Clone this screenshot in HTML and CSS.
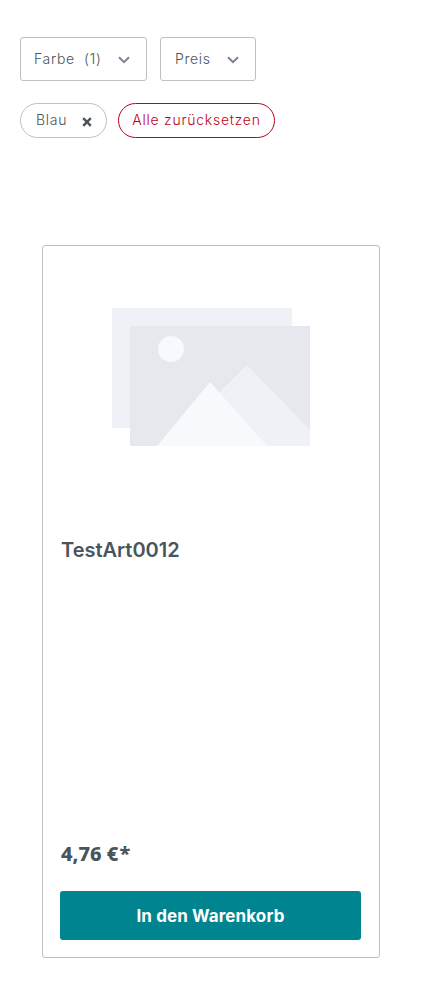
FILE: index.html
```html
<!DOCTYPE html>
<html lang="de">
<head>
    <meta charset="UTF-8">
    <meta name="viewport" content="width=device-width, initial-scale=1.0">
    <title>TestArt0012</title>
    <link rel="stylesheet" href="styles.css">
</head>
<body>
    <div class="filter-row">
        <button class="filter-btn filter-color">
            <span>Farbe&nbsp; (1)</span>
            <svg class="chevron" width="12" height="8" viewBox="0 0 12 8"><path d="M1 1.2l5 5 5-5" fill="none" stroke="#798490" stroke-width="2"/></svg>
        </button>
        <button class="filter-btn filter-price">
            <span>Preis</span>
            <svg class="chevron" width="12" height="8" viewBox="0 0 12 8"><path d="M1 1.2l5 5 5-5" fill="none" stroke="#798490" stroke-width="2"/></svg>
        </button>
    </div>
    <div class="active-row">
        <span class="pill pill-blue">
            <span class="pill-label">Blau</span>
            <svg class="close" width="10" height="10" viewBox="0 0 10 10"><path d="M1.2 1.2l7.600 7.600M8.800 1.200l-7.600 7.600" fill="none" stroke="#4a545b" stroke-width="2.400"/></svg>
        </span>
        <span class="pill pill-reset">Alle zurücksetzen</span>
    </div>

    <div class="card">
        <div class="card-image">
            <svg width="198" height="138" viewBox="0 0 198 138">
                <rect x="0" y="0" width="180" height="120" fill="#f0f1f7"/>
                <rect x="18" y="18" width="180" height="120" fill="#e7e8ed"/>
                <circle cx="59" cy="41" r="13" fill="#f8f9fd"/>
                <path d="M54 138L135 57L198 122V138Z" fill="#f0f1f6"/>
                <path d="M45 138L98 74L155 138Z" fill="#f8f9fd"/>
            </svg>
        </div>
        <div class="card-name">TestArt0012</div>
        <div class="card-price">4,76 €<span class="price-star">*</span></div>
        <button class="buy-btn">In den Warenkorb</button>
    </div>
</body>
</html>
```

FILE: styles.css
```css
body {
    margin: 0;
    padding: 37px 20px 0;
    height: 986px;
    box-sizing: border-box;
    background-color: #fff;
    font-family: Inter, "Liberation Sans", sans-serif;
    color: #4a545b;
}

.filter-row {
    display: flex;
    gap: 13px;
}

.filter-btn {
    display: flex;
    justify-content: space-between;
    align-items: center;
    height: 44px;
    padding: 0 16px 0 13px;
    background-color: #fff;
    border: 1px solid #bcc1c7;
    border-radius: 3px;
    font-family: inherit;
    font-size: 14px;
    font-weight: 300;
    letter-spacing: .7px;
    color: #4a545b;
}

.filter-btn span {
    margin-top: -2px;
}

.filter-color {
    width: 127px;
}

.filter-price {
    width: 96px;
    padding-left: 14px;
}

.chevron {
    margin-top: 2px;
}

.active-row {
    display: flex;
    gap: 11px;
    margin-top: 22px;
}

.pill {
    display: flex;
    align-items: center;
    height: 35px;
    box-sizing: border-box;
    border-radius: 18px;
    font-size: 14px;
    font-weight: 300;
    letter-spacing: .75px;
    line-height: 30px;
}

.pill-blue {
    width: 87px;
    padding-left: 15px;
    gap: 15px;
    border: 1px solid #bcc1c7;
}

.pill-label {
    margin-top: -2px;
}

.close {
    margin-top: 3px;
}

.pill-reset {
    width: 157px;
    justify-content: center;
    padding-bottom: 1px;
    border: 1px solid #c20017;
    color: #c20017;
}

.card {
    display: flex;
    flex-direction: column;
    width: 338px;
    height: 713px;
    box-sizing: border-box;
    margin: 107px 0 0 22px;
    padding: 0 18px 17px 17px;
    border: 1px solid #bcc1c7;
    border-radius: 3px;
}

.card-image {
    display: flex;
    justify-content: center;
    padding-top: 62px;
}

.card-name {
    margin: 92px 0 0;
    padding-left: 1px;
    font-size: 20px;
    font-weight: 600;
    line-height: 24px;
}

.card-price {
    margin: auto 0 0 1px;
    font-size: 20px;
    font-weight: 800;
    line-height: 24px;
    font-family: "Noto Sans", Inter, sans-serif;
}

.price-star {
    margin-left: 1px;
}

.buy-btn {
    height: 49px;
    margin-top: 25px;
    background-color: #008490;
    border: none;
    border-radius: 3px;
    color: #fff;
    font-family: inherit;
    font-size: 17px;
    font-weight: 700;
    letter-spacing: .1px;
}
```
